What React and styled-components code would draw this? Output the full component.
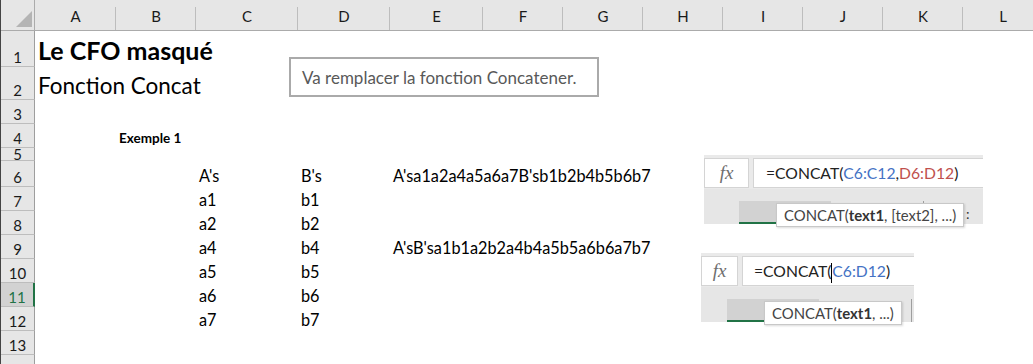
import React from "react";
import styled, { createGlobalStyle } from "styled-components";

const GlobalStyle = createGlobalStyle`
  html, body { margin: 0; padding: 0; background: #fff; }
  body { font-family: "Lato", "Open Sans", sans-serif; overflow: hidden; }
`;

// largeurs des colonnes et hauteurs des lignes relevées sur la capture
const colWidths = [81, 80, 102, 92, 93, 80, 80, 80, 80, 80, 80, 80];
const colNames = ["A", "B", "C", "D", "E", "F", "G", "H", "I", "J", "K", "L"];
const rowHeights = [36, 33, 24, 24, 13, 26, 24, 24, 24, 24, 24, 24, 24, 24];

const cells = {
  "1-0": { text: "Le CFO masqué", kind: "title" },
  "2-0": { text: "Fonction Concat", kind: "sub" },
  "4-1": { text: "Exemple 1", kind: "small" },
  "6-2": { text: "A's" }, "6-3": { text: "B's" }, "6-4": { text: "A'sa1a2a4a5a6a7B'sb1b2b4b5b6b7" },
  "7-2": { text: "a1" }, "7-3": { text: "b1" },
  "8-2": { text: "a2" }, "8-3": { text: "b2" },
  "9-2": { text: "a4" }, "9-3": { text: "b4" }, "9-4": { text: "A'sB'sa1b1a2b2a4b4a5b5a6b6a7b7" },
  "10-2": { text: "a5" }, "10-3": { text: "b5" },
  "11-2": { text: "a6" }, "11-3": { text: "b6" },
  "12-2": { text: "a7" }, "12-3": { text: "b7" },
};

const App = () => {
  return (
    <>
      <GlobalStyle />
      <Sheet>
        <Corner><Triangle /></Corner>
        {colNames.map((c) => (
          <ColHead key={c}>{c}</ColHead>
        ))}
        {rowHeights.map((h, r) => {
          const row = r + 1;
          return (
            <React.Fragment key={row}>
              <RowHead $active={row === 11} $short={h < 20}>{row}</RowHead>
              {colNames.map((c, ci) => {
                const cell = cells[`${row}-${ci}`];
                return (
                  <Cell key={c} $kind={cell?.kind}>
                    {cell ? cell.text : null}
                  </Cell>
                );
              })}
            </React.Fragment>
          );
        })}

        <Note>Va remplacer la fonction Concatener.</Note>

        <Shot $left={703} $top={155} $width={279}>
          <Bar>
            <FxBox $w={45}>fx</FxBox>
            <Input $pad={12}>
              =CONCAT(<Ref $c="#4472c4">C6:C12</Ref>,<Ref $c="#c0504d">D6:D12</Ref>)
            </Input>
          </Bar>
          <Strip>
            <SelCell $left={35} $w={92} />
            <Divider $left={219} />
            <Tip $left={72}>
              CONCAT(<b>text1</b>, [text2], ...)
            </Tip>
            <Stray $left={262}>:</Stray>
          </Strip>
        </Shot>

        <Shot $left={700} $top={253} $width={213}>
          <Bar>
            <FxBox $w={37}>fx</FxBox>
            <Input $pad={11}>
              =CONCAT(<Caret /><Ref $c="#4472c4">C6:D12</Ref>)
            </Input>
          </Bar>
          <Strip>
            <SelCell $left={26} $w={92} />
            <Divider $left={210} />
            <Tip $left={63}>
              CONCAT(<b>text1</b>, ...)
            </Tip>
          </Strip>
        </Shot>
      </Sheet>
    </>
  );
};

export default App;

const Sheet = styled.div`
  position: relative;
  display: grid;
  grid-template-columns: 34px ${colWidths.map((w) => w + "px").join(" ")};
  grid-template-rows: 31px ${rowHeights.map((h) => h + "px").join(" ")};
  width: 1033px;
  height: 364px;
  overflow: hidden;
  border-left: 1px solid #444;
  box-sizing: border-box;
`;

const Corner = styled.div`
  background: #e6e6e6;
  border-right: 1px solid #ababab;
  border-bottom: 1px solid #ababab;
  display: flex;
  align-items: flex-end;
  justify-content: flex-end;
  padding: 0 2px 3px 0;
`;

const Triangle = styled.div`
  width: 0;
  height: 0;
  border-left: 16px solid transparent;
  border-bottom: 16px solid #b4b4b4;
`;

const ColHead = styled.div`
  background: #e6e6e6;
  border-bottom: 1px solid #ababab;
  display: flex;
  align-items: flex-end;
  justify-content: center;
  padding-bottom: 5px;
  font-size: 15px;
  color: #1a1a1a;
  position: relative;
  &::after {
    content: "";
    position: absolute;
    right: 0;
    top: 7px;
    bottom: 0;
    width: 1px;
    background: #bdbdbd;
  }
`;

const RowHead = styled.div`
  background: ${(p) => (p.$active ? "#d2d2d2" : "#e6e6e6")};
  color: ${(p) => (p.$active ? "#217346" : "#1a1a1a")};
  border-right: ${(p) => (p.$active ? "2px solid #217346" : "1px solid #9e9e9e")};
  border-bottom: 1px solid #bdbdbd;
  display: flex;
  align-items: ${(p) => (p.$short ? "flex-start" : "flex-end")};
  justify-content: center;
  padding-bottom: 1px;
  font-size: 15px;
  overflow: hidden;
  line-height: ${(p) => (p.$short ? "12px" : 1)};
`;

const sizes = { title: "25px", sub: "22.5px", small: "13.5px" };

const Cell = styled.div`
  display: flex;
  align-items: flex-end;
  padding: 0 0 ${(p) => (p.$kind === "title" ? 4 : p.$kind === "sub" ? 3 : 3)}px 3px;
  white-space: nowrap;
  overflow: visible;
  color: #000;
  font-size: ${(p) => sizes[p.$kind] || "16.3px"};
  font-weight: ${(p) => (p.$kind === "title" || p.$kind === "small" ? 700 : 400)};
  line-height: 1;
  min-width: 0;
`;

const Note = styled.div`
  position: absolute;
  left: 288px;
  top: 57px;
  width: 310px;
  height: 40px;
  box-sizing: border-box;
  border: 2px solid #aaaaaa;
  background: #fff;
  color: #595959;
  font-size: 17px;
  display: flex;
  align-items: center;
  padding-left: 11px;
  white-space: nowrap;
`;

const Shot = styled.div`
  position: absolute;
  left: ${(p) => p.$left}px;
  top: ${(p) => p.$top}px;
  width: ${(p) => p.$width}px;
  display: flex;
  flex-direction: column;
`;

const Bar = styled.div`
  height: 34px;
  background: #eaeaea;
  display: flex;
  gap: 4px;
  padding: 3px 0 1px 0;
  box-sizing: border-box;
`;

const FxBox = styled.div`
  width: ${(p) => p.$w}px;
  background: #fff;
  border: 1px solid #d4d4d4;
  box-sizing: border-box;
  display: flex;
  align-items: center;
  justify-content: center;
  font-family: "Liberation Serif", "DejaVu Serif", serif;
  font-style: italic;
  font-size: 19px;
  color: #6e6e6e;
`;

const Input = styled.div`
  flex: 1;
  background: #fff;
  border: 1px solid #d4d4d4;
  border-right: none;
  box-sizing: border-box;
  display: flex;
  align-items: center;
  padding-left: ${(p) => p.$pad}px;
  font-size: 15.7px;
  color: #222;
  white-space: nowrap;
`;

const Ref = styled.span`
  color: ${(p) => p.$c};
`;

const Caret = styled.span`
  display: inline-block;
  width: 1px;
  height: 20px;
  background: #000;
  margin: 0 0 -4px 0;
`;

const Strip = styled.div`
  position: relative;
  height: 35px;
  background: #e6e6e6;
`;

const SelCell = styled.div`
  position: absolute;
  left: ${(p) => p.$left}px;
  width: ${(p) => p.$w}px;
  bottom: 0;
  height: 23px;
  background: #d2d2d2;
  border-bottom: 2px solid #217346;
  box-sizing: border-box;
`;

const Divider = styled.div`
  position: absolute;
  left: ${(p) => p.$left}px;
  top: 12px;
  bottom: 0;
  width: 1px;
  background: #9e9e9e;
`;

const Tip = styled.div`
  position: absolute;
  left: ${(p) => p.$left}px;
  top: 14px;
  height: 24px;
  box-sizing: border-box;
  background: #fff;
  border: 1px solid #c8c8c8;
  box-shadow: 1px 1px 2px rgba(0, 0, 0, 0.15);
  display: flex;
  align-items: center;
  padding: 0 7px;
  font-size: 14.9px;
  color: #444;
  white-space: nowrap;
  b { color: #333; margin: 0; }
`;

const Stray = styled.span`
  position: absolute;
  left: ${(p) => p.$left}px;
  top: 16px;
  font-size: 14px;
  color: #333;
`;
